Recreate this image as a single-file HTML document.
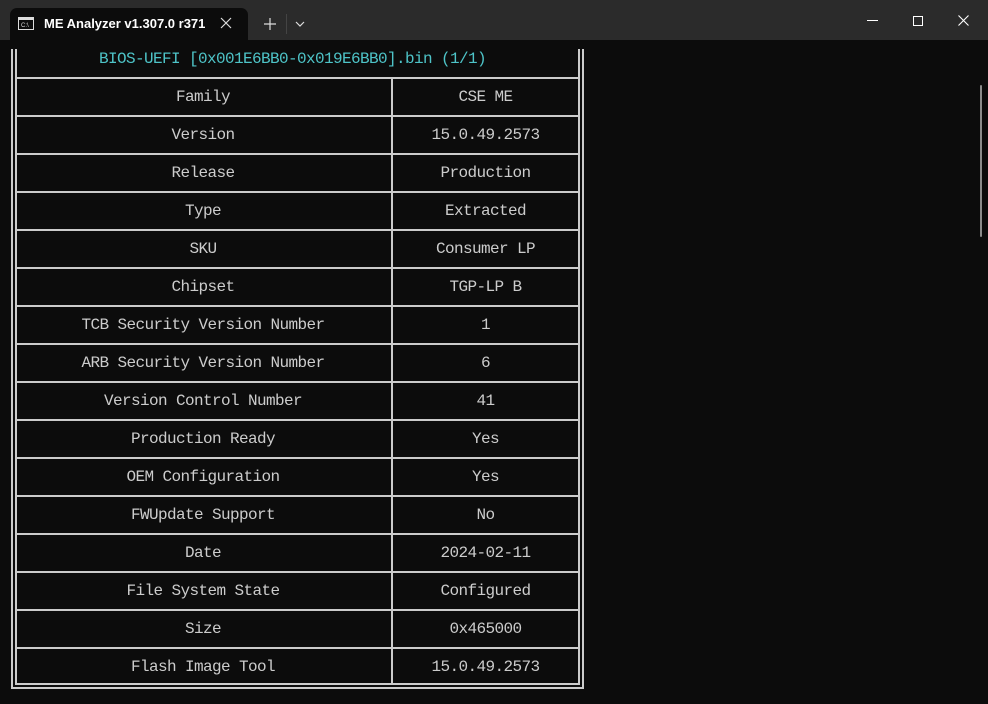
<!DOCTYPE html>
<html><head><meta charset="utf-8"><style>
body{margin:0;width:988px;height:704px;background:#0c0c0c;overflow:hidden;position:relative;font-family:"Liberation Mono",monospace;}
.tb{position:absolute;left:0;top:0;width:988px;height:40px;background:#2b2b2b;}
.tab{position:absolute;left:10px;top:8px;width:238px;height:32px;background:#0c0c0c;border-radius:7px 7px 0 0;}
.ttl{position:absolute;left:44px;top:16px;font:600 13px "Liberation Sans",sans-serif;color:#fff;}
.l{position:absolute;background:#cccccc;}
.t{position:absolute;font-size:16px;letter-spacing:-0.6px;color:#cccccc;text-align:center;line-height:20px;white-space:pre;}
</style></head><body>
<div class="tb"></div>
<div class="tab"></div>
<svg style="position:absolute;left:18px;top:17px" width="16" height="13"><rect x="0.5" y="0.5" width="15" height="12" fill="none" stroke="#ddd"/><rect x="1" y="1" width="14" height="2" fill="#ddd"/><text x="3" y="10" font-size="6" fill="#ddd" font-family="Liberation Sans">C:\</text></svg>
<div class="ttl">ME Analyzer v1.307.0 r371</div>
<svg style="position:absolute;left:220px;top:17px" width="12" height="12"><path d="M1 1L11 11M11 1L1 11" stroke="#ddd" stroke-width="1.2"/></svg>
<svg style="position:absolute;left:264px;top:18px" width="12" height="12"><path d="M6 0V12M0 6H12" stroke="#ddd" stroke-width="1.2"/></svg>
<div style="position:absolute;left:286px;top:14px;width:1px;height:20px;background:#444"></div>
<svg style="position:absolute;left:295px;top:21px" width="10" height="6"><path d="M1 1L5 5L9 1" stroke="#ddd" fill="none" stroke-width="1.2"/></svg>
<div style="position:absolute;left:867px;top:20px;width:11px;height:1px;background:#fff"></div>
<div style="position:absolute;left:913px;top:16px;width:8px;height:8px;border:1px solid #fff"></div>
<svg style="position:absolute;left:958px;top:15px" width="11" height="11"><path d="M0.5 0.5L10.5 10.5M10.5 0.5L0.5 10.5" stroke="#fff" stroke-width="1.1"/></svg>
<div style="position:absolute;left:980px;top:85px;width:2px;height:152px;background:#8a8a8a;border-radius:1px"></div>
<div class="l" style="left:11px;top:49px;width:2px;height:640px"></div>
<div class="l" style="left:15px;top:49px;width:2px;height:636px"></div>
<div class="l" style="left:578px;top:49px;width:2px;height:636px"></div>
<div class="l" style="left:582px;top:49px;width:2px;height:640px"></div>
<div class="l" style="left:11px;top:687px;width:573px;height:2px"></div>
<div class="l" style="left:391px;top:77px;width:2px;height:608px"></div>
<div class="t" style="left:12px;top:49px;width:561px;color:#4ec4c8">BIOS-UEFI [0x001E6BB0-0x019E6BB0].bin (1/1)</div>
<div id="rows"></div>
<script>
var d=[["Family","CSE ME"],["Version","15.0.49.2573"],["Release","Production"],["Type","Extracted"],["SKU","Consumer LP"],["Chipset","TGP-LP B"],["TCB Security Version Number","1"],["ARB Security Version Number","6"],["Version Control Number","41"],["Production Ready","Yes"],["OEM Configuration","Yes"],["FWUpdate Support","No"],["Date","2024-02-11"],["File System State","Configured"],["Size","0x465000"],["Flash Image Tool","15.0.49.2573"]];
var h="";
for(var i=0;i<d.length;i++){var y=77+38*i;
h+='<div class="l" style="left:15px;top:'+y+'px;width:565px;height:2px"></div>';
h+='<div class="t" style="left:16px;top:'+(y+10)+'px;width:374px">'+d[i][0]+'</div>';
h+='<div class="t" style="left:393px;top:'+(y+10)+'px;width:185px">'+d[i][1]+'</div>';}
h+='<div class="l" style="left:15px;top:683px;width:565px;height:2px"></div>';
document.getElementById("rows").innerHTML=h;
</script>
</body></html>
